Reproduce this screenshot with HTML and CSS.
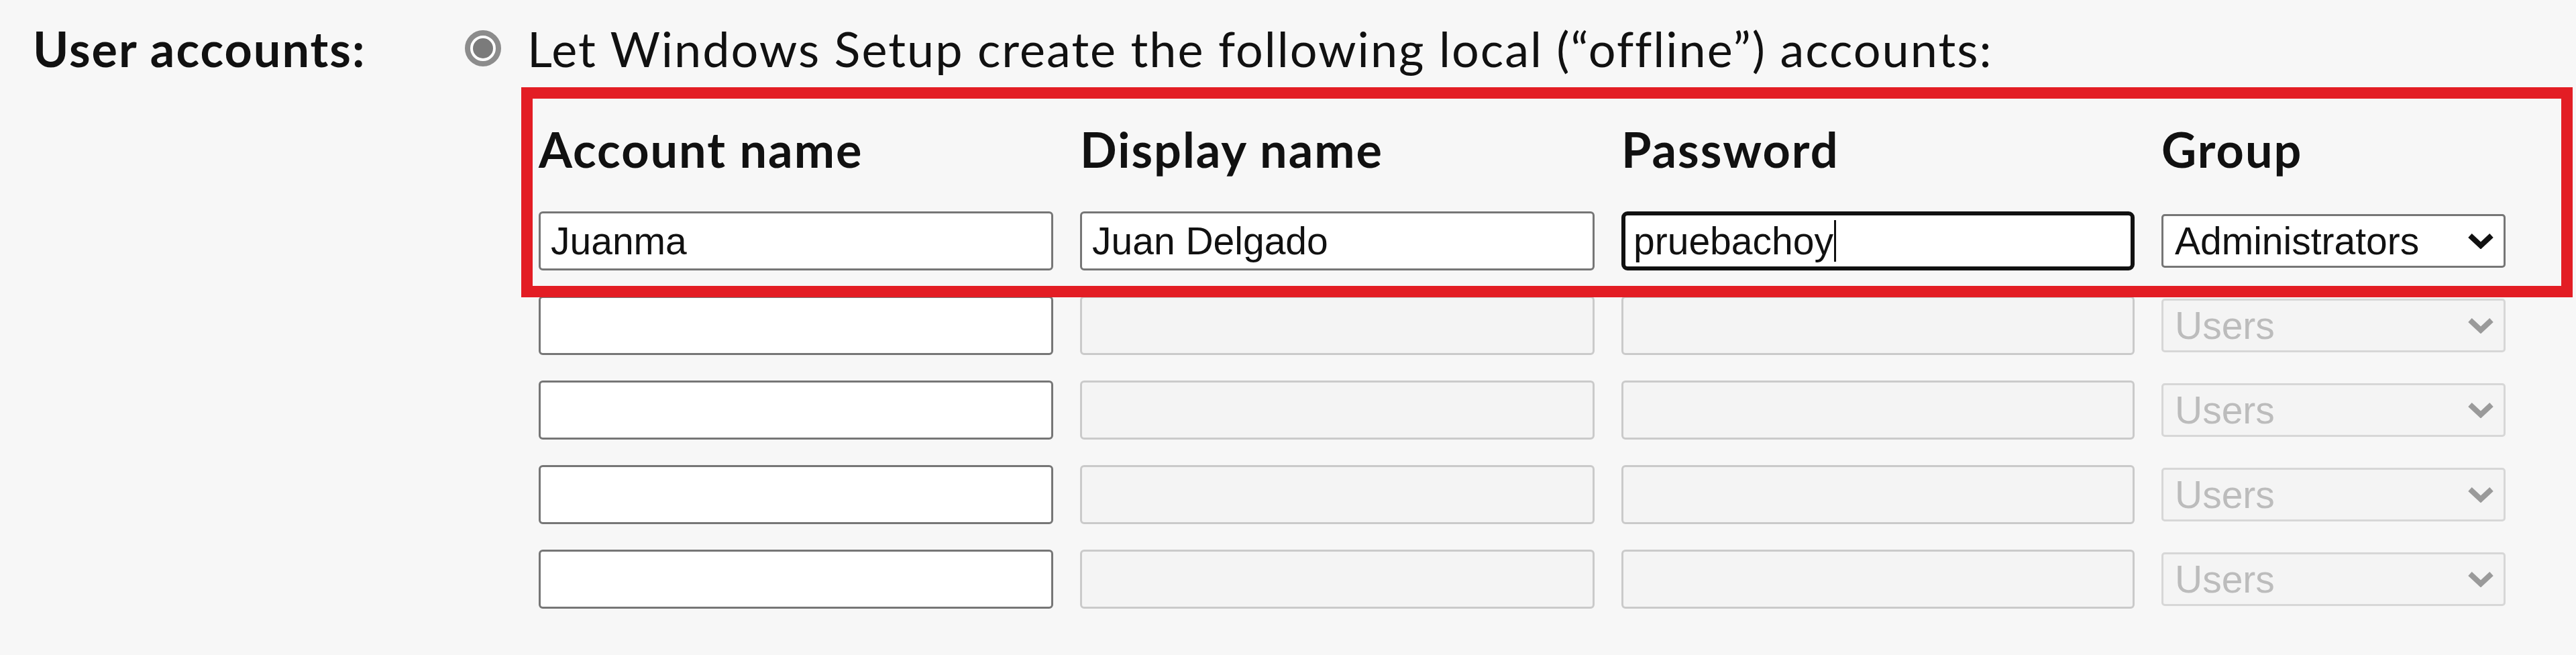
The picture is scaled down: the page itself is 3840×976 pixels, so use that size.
FILE: index.html
```html
<!DOCTYPE html>
<html lang="en">
<head>
  <meta charset="UTF-8" />
  <title>User accounts</title>
  <link rel="stylesheet" href="styles.css">
</head>
<body>
  <div class="field">
    <div class="field-label">User accounts:</div>
    <div class="field-body">
      <label class="option">
        <span class="radio"><span class="radio-dot"></span></span>
        Let Windows Setup create the following local (“offline”) accounts:
      </label>

      <div class="accounts">
        <!-- red annotation frame drawn over the first row -->
        <div class="highlight"></div>

        <div class="col-head">Account name</div>
        <div class="col-head">Display name</div>
        <div class="col-head">Password</div>
        <div class="col-head">Group</div>

        <input class="text-input" type="text" value="Juanma" />
        <input class="text-input" type="text" value="Juan Delgado" />
        <div class="text-input focused">pruebachoy<span class="caret"></span></div>
        <div class="select-wrap">
          <select class="group-select">
            <option>Administrators</option>
            <option>Users</option>
          </select>
          <svg class="chevron" viewBox="0 0 40 24"><path d="M4 4 L20 19 L36 4" /></svg>
        </div>

        <input class="text-input" type="text" />
        <input class="text-input" type="text" disabled />
        <input class="text-input" type="text" disabled />
        <div class="select-wrap">
          <select class="group-select" disabled><option>Users</option></select>
          <svg class="chevron" viewBox="0 0 40 24"><path d="M4 4 L20 19 L36 4" /></svg>
        </div>

        <input class="text-input" type="text" />
        <input class="text-input" type="text" disabled />
        <input class="text-input" type="text" disabled />
        <div class="select-wrap">
          <select class="group-select" disabled><option>Users</option></select>
          <svg class="chevron" viewBox="0 0 40 24"><path d="M4 4 L20 19 L36 4" /></svg>
        </div>

        <input class="text-input" type="text" />
        <input class="text-input" type="text" disabled />
        <input class="text-input" type="text" disabled />
        <div class="select-wrap">
          <select class="group-select" disabled><option>Users</option></select>
          <svg class="chevron" viewBox="0 0 40 24"><path d="M4 4 L20 19 L36 4" /></svg>
        </div>

        <input class="text-input" type="text" />
        <input class="text-input" type="text" disabled />
        <input class="text-input" type="text" disabled />
        <div class="select-wrap">
          <select class="group-select" disabled><option>Users</option></select>
          <svg class="chevron" viewBox="0 0 40 24"><path d="M4 4 L20 19 L36 4" /></svg>
        </div>
      </div>
    </div>
  </div>
</body>
</html>
```

FILE: styles.css
```css
* { box-sizing: border-box; }

body {
  margin: 0;
  background: #f7f7f7;
  color: #111;
  font-family: 'Lato', 'Open Sans', sans-serif;
  overflow: hidden;
}

.field {
  display: flex;
  padding: 27px 0 0 49px;
}

.field-label {
  width: 644px;
  font-size: 72px;
  font-weight: 700;
  line-height: 90px;
  letter-spacing: 2px;
}

.field-body {
  display: flex;
  flex-direction: column;
}

.option {
  display: flex;
  align-items: center;
  gap: 39px;
  height: 90px;
  font-size: 72px;
  line-height: 90px;
  letter-spacing: 2px;
}

.radio {
  width: 54px;
  height: 54px;
  border-radius: 50%;
  border: 8px solid #8c8c8c;
  background: #fff;
  display: flex;
  align-items: center;
  justify-content: center;
  flex-shrink: 0;
}

.radio-dot {
  width: 30px;
  height: 30px;
  border-radius: 50%;
  background: #7b7b7b;
}

.accounts {
  position: relative;
  display: grid;
  grid-template-columns: 767px 767px 765px 513px;
  grid-template-rows: 100px repeat(5, 88px);
  column-gap: 40px;
  row-gap: 38px;
  margin: 60px 0 0 110px;
}

.highlight {
  position: absolute;
  left: -26px;
  top: -47px;
  width: 3058px;
  height: 313px;
  border: 17px solid #e31d24;
  pointer-events: none;
  z-index: 2;
}

.col-head {
  font-size: 72px;
  font-weight: 700;
  line-height: 90px;
  letter-spacing: 2px;
}

.text-input {
  height: 88px;
  width: 100%;
  border: 3px solid #767676;
  border-radius: 6px;
  background: #fff;
  padding: 0 15px;
  font-family: 'Liberation Sans', Arial, sans-serif;
  font-size: 57px;
  color: #111;
  outline: none;
}

.text-input:disabled {
  background: #f4f4f4;
  border-color: #cacaca;
}

.text-input.focused {
  display: flex;
  align-items: center;
  border: 6px solid #111;
  border-radius: 9px;
  padding-left: 12px;
}

.caret {
  display: inline-block;
  width: 3px;
  height: 62px;
  margin-left: 1px;
  background: #111;
}

.select-wrap {
  position: relative;
  align-self: center;
  height: 80px;
}

.group-select {
  appearance: none;
  width: 100%;
  height: 100%;
  border: 3px solid #767676;
  border-radius: 5px;
  background: #fff;
  padding: 0 0 0 17px;
  font-family: 'Liberation Sans', Arial, sans-serif;
  font-size: 57px;
  color: #111;
}

.group-select:disabled {
  background: #f4f4f4;
  border-color: #cacaca;
  color: #a4a4a4;
}

.chevron {
  position: absolute;
  right: 17px;
  top: 28px;
  width: 40px;
  height: 24px;
  fill: none;
  stroke: #111;
  stroke-width: 8;
  pointer-events: none;
}

.group-select:disabled + .chevron {
  stroke: #9a9a9a;
}
```
